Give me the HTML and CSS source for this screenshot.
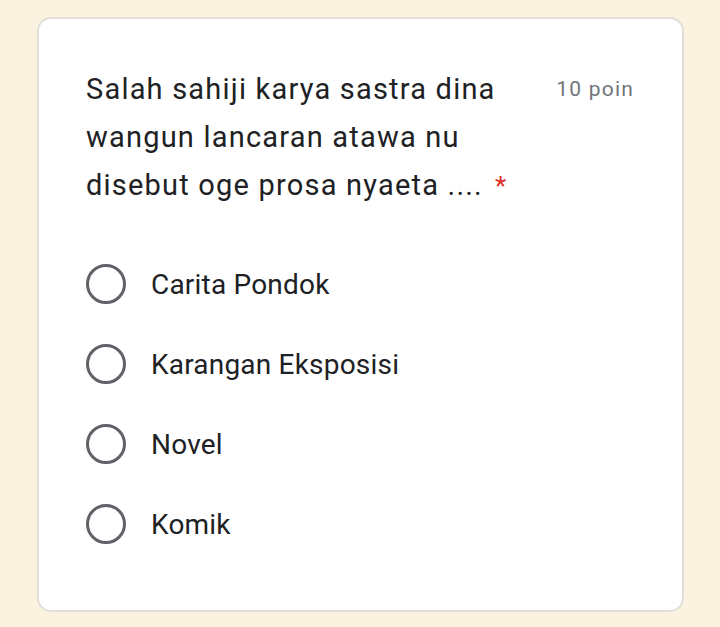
FILE: index.html
```html
<!DOCTYPE html>
<html>
<head>
<meta charset="utf-8">
<link rel="stylesheet" href="styles.css">
</head>
<body>
<div class="card">
  <div class="header">
    <div class="title">Salah sahiji karya sastra dina wangun lancaran atawa nu disebut oge prosa nyaeta ....<span class="req">*</span></div>
    <div class="points">10 poin</div>
  </div>
  <div class="options">
    <div class="option"><span class="radio"></span><span class="label">Carita Pondok</span></div>
    <div class="option"><span class="radio"></span><span class="label">Karangan Eksposisi</span></div>
    <div class="option"><span class="radio"></span><span class="label">Novel</span></div>
    <div class="option"><span class="radio"></span><span class="label">Komik</span></div>
  </div>
</div>
</body>
</html>
```
FILE: styles.css
```css
html, body {
  margin: 0;
  padding: 0;
  background: #fbf3df;
  height: 100%;
}
body {
  padding: 17px 36px 0 37px;
  box-sizing: border-box;
  font-family: Roboto, "Liberation Sans", sans-serif;
}
.card {
  background: #ffffff;
  border: 2px solid #e2dfd8;
  border-radius: 14px;
  height: 595px;
  box-sizing: border-box;
  padding: 46px 48px 0 47px;
}
.header {
  display: flex;
  justify-content: space-between;
  align-items: flex-start;
}
.title {
  width: 440px;
  font-size: 29px;
  letter-spacing: 1.2px;
  line-height: 48px;
  color: #202124;
}
.req {
  color: #d93025;
  margin-left: 12px;
  font-size: 26px;
  letter-spacing: 0;
}
.points {
  font-size: 21px;
  letter-spacing: 1.2px;
  color: #70757a;
  line-height: 48px;
}
.options {
  margin-top: 54px;
  display: flex;
  flex-direction: column;
  gap: 40px;
}
.option {
  display: flex;
  align-items: center;
  height: 40px;
}
.radio {
  width: 40px;
  height: 40px;
  box-sizing: border-box;
  border: 3.5px solid #5f6368;
  border-radius: 50%;
  flex: none;
}
.label {
  margin-left: 25px;
  font-size: 28px;
  letter-spacing: 0.2px;
  color: #202124;
}
```
